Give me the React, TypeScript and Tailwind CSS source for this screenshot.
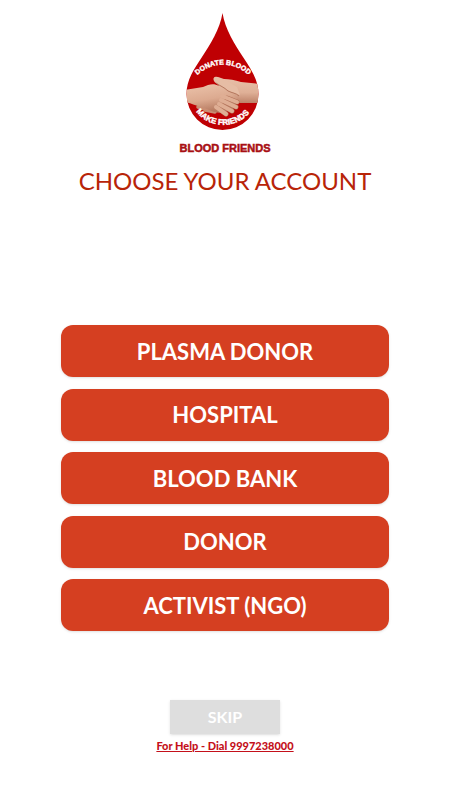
import * as React from 'react';

const RED = '#bf0003';

const accounts = [
  'PLASMA DONOR',
  'HOSPITAL',
  'BLOOD BANK',
  'DONOR',
  'ACTIVIST (NGO)',
];

const Logo = () => (
  <svg
    viewBox="0 0 120 150"
    role="img"
    aria-label="Blood Friends"
    className="h-[150px] w-[120px]"
  >
    <defs>
      <linearGradient id="leftSkin" x1="0" y1="0" x2="0.3" y2="1">
        <stop offset="0" stopColor="#ecc4ac" />
        <stop offset="0.6" stopColor="#dcaa90" />
        <stop offset="1" stopColor="#b67a60" />
      </linearGradient>
      <linearGradient id="rightSkin" x1="0.5" y1="0" x2="0.5" y2="1">
        <stop offset="0" stopColor="#e9c1aa" />
        <stop offset="0.6" stopColor="#dfb097" />
        <stop offset="1" stopColor="#bd8168" />
      </linearGradient>
      <clipPath id="drop">
        <path d="M57.500 8C55 24 45 40 37 52C29 64 21.500 75 21.500 89A36 36 0 0 0 93.500 89C93.500 75 86 64 78 52C70 40 60 24 57.500 8Z" />
      </clipPath>
      <path id="arcTop" d="M25 80A37 37 0 0 1 91 80" />
      <path id="arcBottom" d="M24.500 89A34 34 0 0 0 92 91" />
    </defs>
    <g clipPath="url(#drop)">
      <rect width="120" height="130" fill={RED} />
      {/* fingertips under the left palm */}
      <g stroke="#c98d73" strokeWidth="3.500" strokeLinecap="round">
        <path d="M33 102L44 105" />
        <path d="M40 105L50 107" />
      </g>
      {/* right arm */}
      <path
        d="M95 79L76 77C70 75 64 74 59 74C55 73 52 71 50 72C47 73 50 77 53 79L56 88L73 98L95 98Z"
        fill="url(#rightSkin)"
      />
      {/* left arm */}
      <path
        d="M20 85L38 82C44 79 49 78 54 81L62 86L72 93L68 104L57 108C48 108 43 104 37 102C31 101 26 98 20 97Z"
        fill="url(#leftSkin)"
      />
      {/* left fingers */}
      <g fill="none" strokeLinecap="round">
        <g stroke="#b3745b" strokeWidth="5">
          <path d="M62 93L72 97" />
          <path d="M60 97L71 102" />
          <path d="M58 101L67 106" />
          <path d="M53 103L61 109" />
        </g>
        <g stroke="#dfae94" strokeWidth="4">
          <path d="M51 102L61 109" />
          <path d="M54 99L67 106" />
          <path d="M56 95L71 102" />
          <path d="M57 91L72 97" />
        </g>
      </g>
      {/* right thumb over the left hand */}
      <path
        d="M49 73C51 71 55 74 60 75L72 82L75 90L67 87C62 85 59 82 54 80C51 79 47 75 49 73Z"
        fill="#e6bda5"
      />
      <path
        d="M51 78C55 81 59 82 63 86C67 88 71 88 74 91"
        fill="none"
        stroke="#a8684f"
        strokeWidth="0.800"
      />
    </g>
    <g
      fill="white"
      stroke="white"
      strokeWidth="0.400"
      fontFamily="Liberation Sans, sans-serif"
      fontWeight="bold"
      textAnchor="middle"
    >
      <text fontSize="7">
        <textPath href="#arcTop" startOffset="50%">DONATE BLOOD</textPath>
      </text>
      <text fontSize="8">
        <textPath href="#arcBottom" startOffset="50%">MAKE FRIENDS</textPath>
      </text>
    </g>
    <text
      x="60"
      y="147"
      fill="#a80f14"
      stroke="#a80f14"
      strokeWidth="0.500"
      fontFamily="Liberation Sans, sans-serif"
      fontWeight="bold"
      fontSize="11"
      textAnchor="middle"
    >
      BLOOD FRIENDS
    </text>
  </svg>
);

const App = () => (
  <main className="flex min-h-screen flex-col items-center bg-white pt-[5px] pb-8 font-['Lato',sans-serif]">
    <Logo />
    <h1 className="mt-[10px] text-2xl text-[#b82408]">CHOOSE YOUR ACCOUNT</h1>
    <div className="mt-32 flex h-[306px] w-full flex-col justify-between px-[61px]">
      {accounts.map((account) => (
        <button
          key={account}
          type="button"
          className="h-[52px] w-full cursor-pointer rounded-xl bg-[#d53f21] text-[22px] font-bold text-white shadow-sm"
        >
          {account}
        </button>
      ))}
    </div>
    <button
      type="button"
      className="mt-[69px] h-[34px] w-[110px] cursor-pointer bg-[#dedede] text-base font-bold text-white shadow-sm"
    >
      SKIP
    </button>
    <a
      href="tel:9997238000"
      className="mt-1 text-[11px] leading-4 font-black text-[#c4101a] underline"
    >
      For Help - Dial 9997238000
    </a>
  </main>
);

export default App;
